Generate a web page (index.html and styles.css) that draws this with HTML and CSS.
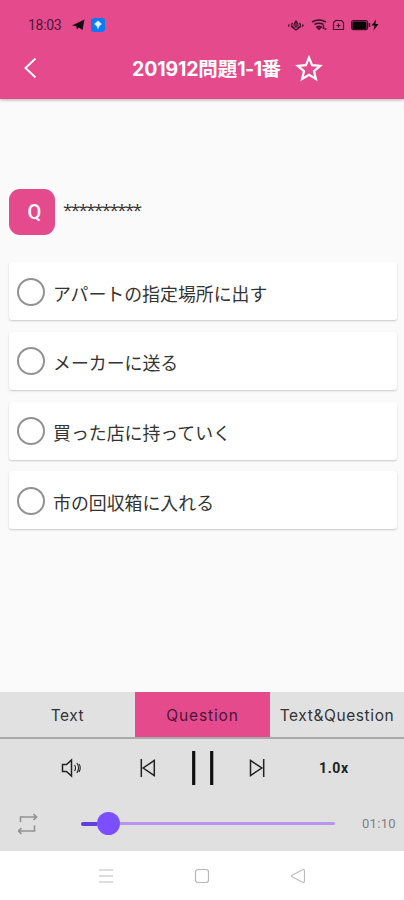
FILE: index.html
```html
<!DOCTYPE html>
<html lang="ja">
<head>
<meta charset="utf-8">
<title>201912問題1-1番</title>
<link rel="stylesheet" href="styles.css">
</head>
<body>
<header class="header">
  <div class="status">
    <span class="clock">18:03</span>
    <svg class="plane" width="13" height="12" viewBox="0 0 13 12"><path d="M0 6.5 12.5 0.5 10.5 11 6.8 8.5 5 10.5 4.3 7.2Z" fill="#160b14"/></svg>
    <svg class="app" width="14" height="14" viewBox="0 0 14 14"><rect width="14" height="14" rx="3" fill="#087cf5"/><path d="m7 2.500 4 3.500-2.500 2L7 11.500 5.500 8 3 6z" fill="#c4e8ff"/><path d="M7 4v5M5 6h4" stroke="#fff"/></svg>
    <svg class="sysicons" width="94" height="14" viewBox="286 18 94 14" fill="none" stroke="#3b1029" stroke-width="1.2">
      <path d="M288 25.500h1.500M302 25.500h1.500" stroke-width="2"/>
      <path d="M292.500 23q-2 2 0 4.500M299.500 23q2 2 0 4.500M294 26q0-3 2-5 2 2 2 5M292 27h8l-4 3zM296 23v4"/>
      <path d="M312 22q7-4 14 0M314.500 24.500q4.500-2.500 9 0M317 27q2-1.500 4 0l-2 2z" stroke-width="1.700"/><path d="M323.500 25v4M325.500 28v2" stroke-width="1.500"/>
      <path d="M333.500 29.500v-7l2-2h6l2 2v7z"/><path d="M338.500 23.500v4M336.500 25.500h4"/>
      <rect x="351.600" y="20.600" width="16" height="9" rx="2"/><rect x="353" y="22" width="13" height="6.400" rx="1" fill="#0b0509" stroke="#0b0509"/><path d="M369.500 23v4" stroke-width="1.500"/>
      <path d="m376 19.500-4.500 6h3l-1 5 5-6.500h-3z" fill="#0b0509" stroke="none"/>
    </svg>
  </div>
  <div class="titlebar">
    <svg class="back" width="14" height="22" viewBox="0 0 14 22"><path d="M12.500 1.500 2.500 11l10 9.500" fill="none" stroke="#fff" stroke-width="1.900"/></svg>
    <h1 class="title"><span class="digits">201912</span>問題<span class="suffix">1-1</span>番</h1>
    <svg class="star" width="28" height="28" viewBox="0 0 28 28"><path d="m14 2.600 3.100 7.500 8.100.7-6.200 5.300 1.900 7.900-6.900-4.200-6.900 4.200L9 16.100l-6.200-5.300 8.100-.7z" fill="none" stroke="#fff" stroke-width="2.200"/></svg>
  </div>
</header>
<main class="content">
  <div class="question"><span class="badge">Q</span><span class="stars">**********</span></div>
  <div class="options">
    <div class="option"><span class="radio"></span><span>アパートの指定場所に出す</span></div>
    <div class="option"><span class="radio"></span><span>メーカーに送る</span></div>
    <div class="option"><span class="radio"></span><span>買った店に持っていく</span></div>
    <div class="option"><span class="radio"></span><span>市の回収箱に入れる</span></div>
  </div>
</main>
<nav class="tabs">
  <span class="tab tab-text">Text</span><span class="tab tab-question">Question</span><span class="tab tab-both">Text&amp;Question</span>
</nav>
<section class="player">
  <div class="controls">
    <svg class="volume" width="21" height="20" viewBox="0 0 21 20" fill="none" stroke="#222" stroke-width="1.500"><path d="M1.500 6.500h4l5-4.500v16l-5-4.500h-4z"/><path d="M13.500 7q2 3 0 6M15.800 5q3.500 5 0 10M18 6q2.500 4 0 8" stroke-width="1.100"/></svg>
    <svg class="prev" width="16" height="20" viewBox="0 0 16 20" fill="none" stroke="#222" stroke-width="1.500"><path d="M1.300 1v18M14.300 2.500v15L3.200 10z"/></svg>
    <svg class="pause" width="24" height="36" viewBox="0 0 24 36"><path d="M2.700 1v34M20.700 1v34" stroke="#101010" stroke-width="3.200"/></svg>
    <svg class="next" width="16" height="20" viewBox="0 0 16 20" fill="none" stroke="#222" stroke-width="1.500"><path d="M14.700 1v18M1.500 2.500v15L12.800 10z"/></svg>
    <span class="speed">1.0x</span>
  </div>
  <div class="progress">
    <svg class="repeat" width="20" height="22" viewBox="0 0 20 22" fill="none" stroke="#929292" stroke-width="1.600"><path d="M2.500 9V4H18M15.500 1l3 3-3 3M16.500 12.500V18H1M3.500 15l-3 3 3 3"/></svg>
    <div class="track"><span class="played"></span><span class="thumb"></span><span class="remaining"></span></div>
    <span class="time">01:10</span>
  </div>
</section>
<footer class="system">
  <svg width="16" height="16" viewBox="0 0 16 16"><path d="M1 2h14M1 8h14M1 14h14" stroke="#d2d2d2" stroke-width="1.500"/></svg>
  <svg width="16" height="16" viewBox="0 0 16 16"><rect x="1.500" y="1.500" width="13" height="13" rx="2.500" fill="none" stroke="#b8b8b8" stroke-width="1.200"/></svg>
  <svg width="16" height="16" viewBox="0 0 16 16"><path d="M12.700 1.800 2 7.300q-1 .7 0 1.400l10.700 5.500q1.800.6 1.800-1.200V3q0-1.800-1.800-1.200z" fill="none" stroke="#bdbdbd" stroke-width="1.200"/></svg>
</footer>
</body>
</html>
```
FILE: styles.css
```css
* { box-sizing: border-box; }
body {
  margin: 0;
  width: 404px;
  height: 900px;
  overflow: hidden;
  display: flex;
  flex-direction: column;
  background: #fafafa;
  font-family: Inter, "Noto Sans CJK JP", sans-serif;
  color: #333;
}
svg { display: block; flex: none; }
.header {
  height: 99px;
  flex: none;
  background: #e54a8d;
  box-shadow: 0 1px 3px rgba(0, 0, 0, .3);
}
.status {
  height: 38px;
  padding: 12px 24px 0 28px;
  display: flex;
  align-items: center;
}
.clock {
  width: 44px;
  font: 14px/20px Roboto, sans-serif;
  letter-spacing: -.3px;
  color: #4b1735;
}
.app { margin-left: 6px; }
.sysicons { margin-left: auto; }
.titlebar {
  height: 61px;
  padding-left: 23px;
  display: flex;
  align-items: center;
}
.back { margin-right: 95px; margin-top: -2px; }
.title {
  margin: 0;
  width: 149px;
  font-size: 19.500px;
  font-weight: 700;
  line-height: 28px;
  white-space: nowrap;
  color: #fff;
}
.digits { letter-spacing: -.15px; }
.suffix { letter-spacing: -.6px; }
.star { margin-left: 14px; }
.content { flex: 1; padding: 90px 7px 0 9px; }
.question { display: flex; align-items: center; height: 46px; }
.badge {
  width: 46px;
  height: 46px;
  padding-left: 5px;
  border-radius: 11px;
  display: flex;
  align-items: center;
  justify-content: center;
  background: #e54a8d;
  color: #fff;
  font: 500 20px Roboto, sans-serif;
}
.stars {
  margin-left: 8px;
  margin-top: -4px;
  font: 17px/24px "Open Sans", sans-serif;
  letter-spacing: -1.600px;
}
.options { margin-top: 27px; display: grid; gap: 11.800px; }
.option {
  height: 58px;
  display: flex;
  align-items: center;
  padding: 3px 0 0 7.500px;
  border-radius: 3px;
  background: #fff;
  box-shadow: 0 1px 2px rgba(0, 0, 0, .2);
  font: 17.900px/26px "Noto Sans CJK JP", sans-serif;
}
.radio {
  width: 28px;
  height: 28px;
  margin: 0 8.500px 2px 0;
  border: 2.500px solid #929292;
  border-radius: 50%;
}
.tabs {
  height: 47px;
  flex: none;
  display: grid;
  grid-template-columns: 135px 135px 134px;
  border-bottom: 2px solid #aaa;
  background: #e1e1e1;
}
.tab {
  display: flex;
  align-items: center;
  justify-content: center;
  padding-top: 2px;
  font-size: 15.500px;
}
.tab-text { letter-spacing: .5px; }
.tab-question { background: #e54a8d; color: #4b1735; letter-spacing: .85px; }
.tab-both { letter-spacing: .6px; }
.player { height: 112px; flex: none; background: #e0e0e0; }
.controls { height: 57px; padding-left: 61px; display: flex; align-items: center; }
.prev { margin-left: 58px; }
.pause { margin-left: 35px; }
.next { margin-left: 34px; }
.speed { margin-left: 54px; font: 700 14px Roboto, sans-serif; letter-spacing: .6px; color: #222; }
.progress { height: 55px; padding-left: 18px; display: flex; align-items: center; }
.track { width: 254px; margin-left: 43px; display: flex; align-items: center; }
.played { width: 16px; height: 4px; border-radius: 2px 0 0 2px; background: #6040dd; }
.thumb { width: 23px; height: 23px; border-radius: 50%; background: #7b4eff; }
.remaining { flex: 1; height: 3px; border-radius: 0 2px 2px 0; background: #b995f2; }
.time { margin-left: 27px; font: 13px Roboto, sans-serif; letter-spacing: .3px; color: #808080; }
.system {
  height: 49px;
  flex: none;
  padding: 0 98px;
  display: flex;
  align-items: center;
  justify-content: space-between;
  background: #fff;
}
```
